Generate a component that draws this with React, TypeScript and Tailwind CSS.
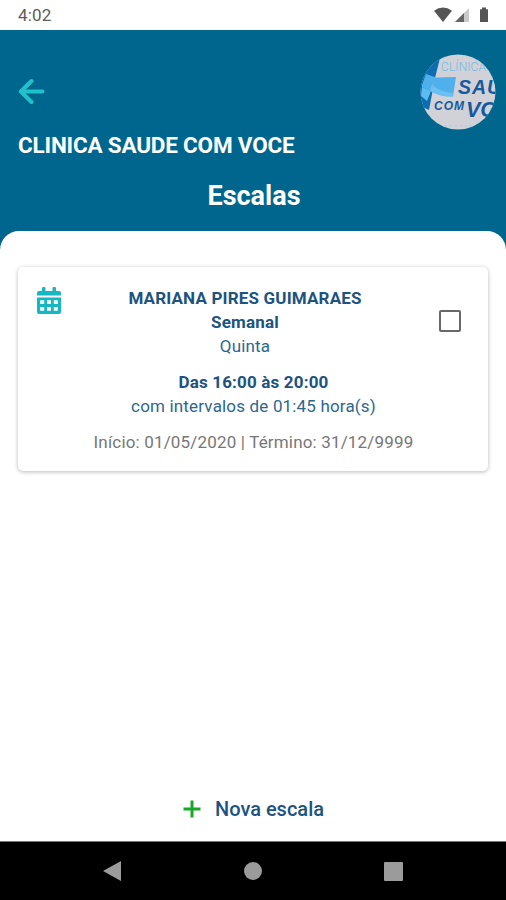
function StatusBar() {
  return (
    <div className="flex h-[30px] shrink-0 items-center justify-between bg-white pr-[16px] pl-[18px] text-[#5c5c5c]">
      <span className="text-[17px] leading-[30px] tracking-[0.2px]">4:02</span>
      <svg width="56" height="18" viewBox="0 0 56 18">
        <path d="M0 4.8Q9-2 18 4.8L9 16Z" fill="#555" />
        <path d="M21 16L35 2V16Z" fill="#c9c9c9" />
        <path d="M21 16L30 7V16Z" fill="#666" />
        <path d="M46 3.2H48V1.5H52V3.2H54V16H46Z" fill="#555" />
      </svg>
    </div>
  );
}

function ClinicLogo() {
  return (
    <svg width="76" height="76" viewBox="0 0 76 76">
      <defs>
        <clipPath id="avatar">
          <circle cx="38" cy="38" r="37.5" />
        </clipPath>
      </defs>
      <g clipPath="url(#avatar)" fontFamily="Roboto, sans-serif">
        <rect width="76" height="76" fill="#d0d2d7" />
        <path d="M0 0H21L15 24L9 56L0 52Z" fill="#0c6db0" />
        <path d="M2 33L11 37L7 47L1 42Z" fill="#5bbcf1" />
        <path d="M2 31L6 20L16 23.5L36 23L33 42.5Q21 43 10 37L2 33Z" fill="#50b0ec" />
        <path d="M12 30Q18 38 33 39L32.5 42.5Q21 43 10 37Z" fill="#69c0f2" />
        <text x="21" y="17" fontSize="12" fontWeight="300" fill="#73b8e6" textLength="45">CLÍNICA</text>
        <g fill="#17599d" fontFamily="Liberation Sans, sans-serif" fontStyle="italic" fontWeight="700">
          <text x="38" y="40" fontSize="19.5" textLength="43">SAU</text>
          <text x="14" y="56" fontSize="12" textLength="30">COM</text>
          <text x="46" y="63" fontSize="21.5">VO</text>
        </g>
        <path d="M25 72H60" stroke="#a9cbe0" strokeWidth="1" strokeDasharray="2 3" />
      </g>
    </svg>
  );
}

function Header() {
  return (
    <header className="flex h-[220px] shrink-0 flex-col bg-[#00668d] text-white">
      <div className="flex h-[102px] items-start justify-between pt-[24px] pr-[10px] pl-[18px]">
        <svg className="mt-[24px]" width="28" height="28" viewBox="0 0 28 28" fill="none" stroke="#21c1cc" strokeWidth="4" strokeLinecap="round" strokeLinejoin="round">
          <path d="M13.5 3L2.8 13.5L13.5 24M3 13.5H24.5" />
        </svg>
        <ClinicLogo />
      </div>
      <div className="pl-[18px] text-[22.5px] leading-[26px] font-bold tracking-[-0.2px] whitespace-nowrap">CLINICA SAUDE COM VOCE</div>
      <h1 className="mt-[22px] pl-[2px] text-center text-[27px] leading-[32px] font-bold">Escalas</h1>
    </header>
  );
}

function CalendarIcon() {
  return (
    <svg className="text-[#16b6c2]" width="24" height="27" viewBox="0 0 24 27" fill="currentColor">
      <path d="M5 4V1.2Q5 0 6.2 0H7.3Q8.5 0 8.5 1.2V4H15.5V1.2Q15.5 0 16.7 0H17.8Q19 0 19 1.2V4H22Q24 4 24 6V8.5H0V6Q0 4 2 4Z" />
      <path fillRule="evenodd" d="M0 10.5H24V25Q24 27 22 27H2Q0 27 0 25ZM3.2 13.3V17H7.2V13.3ZM10 13.3V17H14V13.3ZM16.8 13.3V17H20.8V13.3ZM3.2 20V23.7H7.2V20ZM10 20V23.7H14V20ZM16.8 20V23.7H20.8V20Z" />
    </svg>
  );
}

function ScheduleCard() {
  return (
    <article className="mx-[18px] mt-[36px] h-[204px] rounded-[5px] bg-white pt-[19px] text-[17px] leading-[24px] tracking-[0.17px] text-[#2d668f] shadow-[0_1px_4px_rgba(0,0,0,0.28)]">
      <div className="flex h-[72px] justify-between">
        <div className="w-[48px] pt-px pl-[19px]">
          <CalendarIcon />
        </div>
        <div className="text-center">
          <p className="font-bold text-[#1c5380]">MARIANA PIRES GUIMARAES</p>
          <p className="font-bold text-[#1c5380]">Semanal</p>
          <p>Quinta</p>
        </div>
        <div className="w-[64px] pt-[24px] pl-[15px]">
          <div className="size-[22px] rounded-[2px] border-2 border-[#686868]" />
        </div>
      </div>
      <div className="pl-px text-center">
        <p className="mt-3 font-bold text-[#1c5380]">Das 16:00 às 20:00</p>
        <p>com intervalos de 01:45 hora(s)</p>
        <p className="mt-3 text-[#777]">Início: 01/05/2020 | Término: 31/12/9999</p>
      </div>
    </article>
  );
}

export default function App() {
  return (
    <div className="flex h-[900px] w-[506px] flex-col overflow-hidden bg-white font-['Roboto',sans-serif]">
      <StatusBar />
      <Header />
      <main className="-mt-[19px] flex flex-1 flex-col rounded-t-[19px] bg-white">
        <ScheduleCard />
        <button className="mt-auto mb-[18px] flex h-[28px] items-center justify-center gap-[14px] pl-px text-[20px] font-medium text-[#1c5380]">
          <svg width="18" height="18" viewBox="0 0 18 18" fill="none" stroke="#16a725" strokeWidth="3">
            <path d="M9 0.5V17.5M0.5 9H17.5" />
          </svg>
          <span>Nova escala</span>
        </button>
      </main>
      <nav className="flex h-[59px] shrink-0 items-center justify-between border-t border-[#777] bg-black pr-[103px] pl-[102px]">
        <svg width="20" height="22" viewBox="0 0 20 22"><path d="M1 11L19 1V21Z" fill="#9b9b9b" /></svg>
        <div className="size-[18px] rounded-full bg-[#9b9b9b]" />
        <div className="size-[19px] rounded-[1px] bg-[#9b9b9b]" />
      </nav>
    </div>
  );
}
